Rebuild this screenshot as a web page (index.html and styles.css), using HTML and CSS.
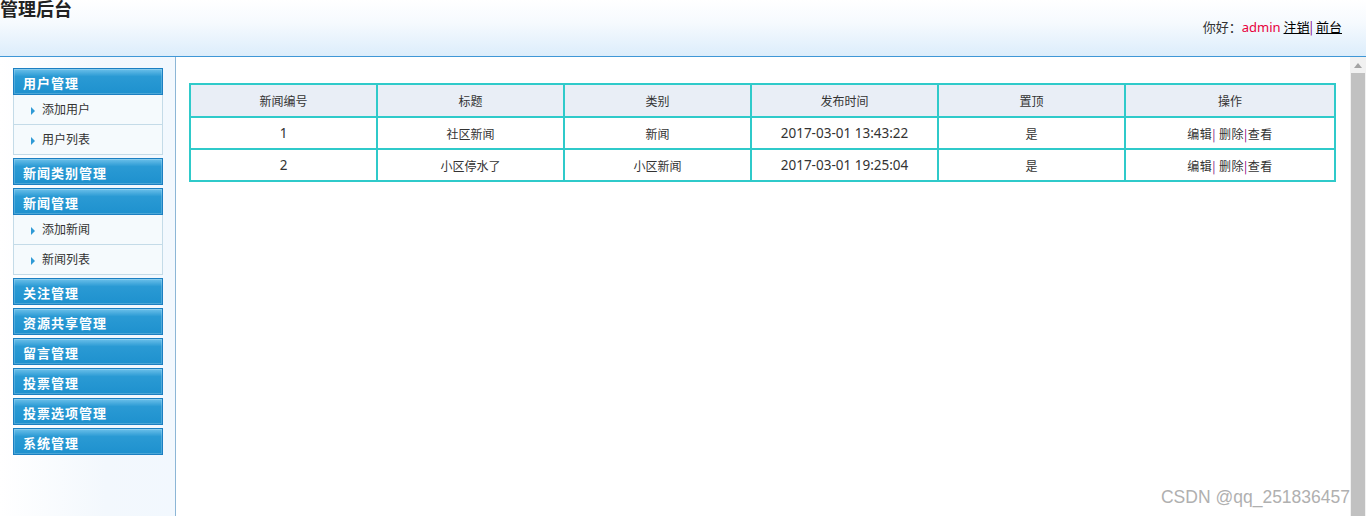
FILE: index.html
```html
<!DOCTYPE html>
<html lang="zh-CN">
<head>
    <meta charset="UTF-8">
    <title>管理后台</title>
    <link rel="stylesheet" href="styles.css">
</head>
<body>

<div class="top">
    <h1>管理后台</h1>
    <div class="userinfo">你好：<span class="uname">admin</span> <a href="#">注销</a><span class="sep">|</span> <a href="#">前台</a></div>
</div>

<div class="wrap">
    <div class="side">
        <div class="menu-title">用户管理</div>
        <ul class="menu-items">
            <li><span class="arrow"></span>添加用户</li>
            <li><span class="arrow"></span>用户列表</li>
        </ul>
        <div class="menu-title">新闻类别管理</div>
        <div class="menu-title">新闻管理</div>
        <ul class="menu-items">
            <li><span class="arrow"></span>添加新闻</li>
            <li><span class="arrow"></span>新闻列表</li>
        </ul>
        <div class="menu-title">关注管理</div>
        <div class="menu-title">资源共享管理</div>
        <div class="menu-title">留言管理</div>
        <div class="menu-title">投票管理</div>
        <div class="menu-title">投票选项管理</div>
        <div class="menu-title">系统管理</div>
    </div>

    <div class="main">
        <div class="content">
            <table class="list">
                <tr>
                    <th class="c1">新闻编号</th>
                    <th class="c2">标题</th>
                    <th class="c3">类别</th>
                    <th class="c4">发布时间</th>
                    <th class="c5">置顶</th>
                    <th>操作</th>
                </tr>
                <tr>
                    <td class="num">1</td>
                    <td>社区新闻</td>
                    <td>新闻</td>
                    <td class="num">2017-03-01 13:43:22</td>
                    <td>是</td>
                    <td class="ops">编辑<span class="sep">|</span> 删除<span class="sep">|</span>查看</td>
                </tr>
                <tr>
                    <td class="num">2</td>
                    <td>小区停水了</td>
                    <td>小区新闻</td>
                    <td class="num">2017-03-01 19:25:04</td>
                    <td>是</td>
                    <td class="ops">编辑<span class="sep">|</span> 删除<span class="sep">|</span>查看</td>
                </tr>
            </table>
        </div>
        <div class="scrollbar">
            <div class="up"></div>
            <div class="thumb"></div>
        </div>
    </div>
</div>

<div class="watermark">CSDN @qq_251836457</div>

</body>
</html>
```

FILE: styles.css
```css
body {
    margin: 0;
    padding: 0;
    font-family: "Noto Sans CJK SC", "Liberation Sans", sans-serif;
    font-size: 12px;
    color: #333;
    overflow: hidden;
}
.top {
    height: 56px;
    border-bottom: 1px solid #3f97d6;
    background: linear-gradient(to bottom, #ffffff 0%, #f6fafe 40%, #dcedfb 100%);
    display: flex;
    justify-content: space-between;
}
.top h1 {
    margin: -4px 0 0 0;
    font-size: 18px;
    line-height: 24px;
    color: #222;
}
.userinfo {
    padding: 17px 24px 0 0;
    font-size: 13px;
    color: #333;
}
.userinfo .uname {
    font-family: "Noto Sans", sans-serif;
    color: #e8003c;
}
.userinfo a {
    color: #000;
}
.sep {
    color: #800080;
}

.wrap {
    display: flex;
    height: 459px;
}
.side {
    width: 150px;
    padding: 11px 12px 0 13px;
    border-right: 1px solid #8cb6d6;
    background: linear-gradient(to right, #ffffff 0%, #f3f8fd 60%, #f2f8fe 100%);
}
.menu-title {
    height: 25px;
    line-height: 27px;
    padding-left: 9px;
    margin-bottom: 3px;
    border: 1px solid #1b7fc2;
    background: linear-gradient(to bottom, #6cc0ea 0%, #2a9ad4 30%, #1e91ce 100%);
    box-shadow: inset 0 0 0 1px rgba(255, 255, 255, 0.2);
    color: #fff;
    font-size: 13px;
    font-weight: bold;
    letter-spacing: 1px;
}
.menu-title + .menu-items {
    margin-top: -3px;
}
.menu-items {
    list-style: none;
    margin: 0 0 3px 0;
    padding: 0;
    border: 1px solid #c4dbe8;
    border-top: none;
    background-color: #f5fafd;
}
.menu-items li {
    height: 29px;
    line-height: 28px;
    padding-left: 17px;
    color: #333;
}
.menu-items li + li {
    border-top: 1px solid #c4dbe8;
}
.arrow {
    display: inline-block;
    width: 0;
    height: 0;
    border-top: 4px solid transparent;
    border-bottom: 4px solid transparent;
    border-left: 4px solid #2f9ad6;
    margin-right: 7px;
    vertical-align: -1px;
}

.main {
    flex: 1;
    display: flex;
    background-color: #fff;
}
.content {
    flex: 1;
    padding: 26px 14px 0 13px;
}
.list {
    width: 100%;
    border-collapse: collapse;
    border: 2px solid #2fcaca;
}
.list th, .list td {
    border: 2px solid #2fcaca;
    text-align: center;
    font-weight: normal;
    color: #333;
    padding: 0;
}
.list th {
    height: 31px;
    background-color: #e9eef6;
}
.list td {
    height: 30px;
    font-size: 12px;
}
.list td.num {
    font-family: "Noto Sans", sans-serif;
    font-size: 13.5px;
}
.list td.ops {
    letter-spacing: 0.5px;
}
.c1, .c2, .c3, .c4, .c5 {
    width: 185px;
}

.scrollbar {
    width: 16px;
    background-color: #f1f1f1;
    display: flex;
    flex-direction: column;
    align-items: center;
}
.scrollbar .up {
    margin-top: 6px;
    width: 0;
    height: 0;
    border-left: 4px solid transparent;
    border-right: 4px solid transparent;
    border-bottom: 5px solid #a3a3a3;
}
.scrollbar .thumb {
    margin-top: 5px;
    width: 14px;
    flex: 1;
    background-color: #c1c1c1;
}

.watermark {
    position: absolute;
    right: 16px;
    bottom: 8px;
    font-family: "Liberation Sans", sans-serif;
    font-size: 17.5px;
    color: #b0b0b0;
}
```
